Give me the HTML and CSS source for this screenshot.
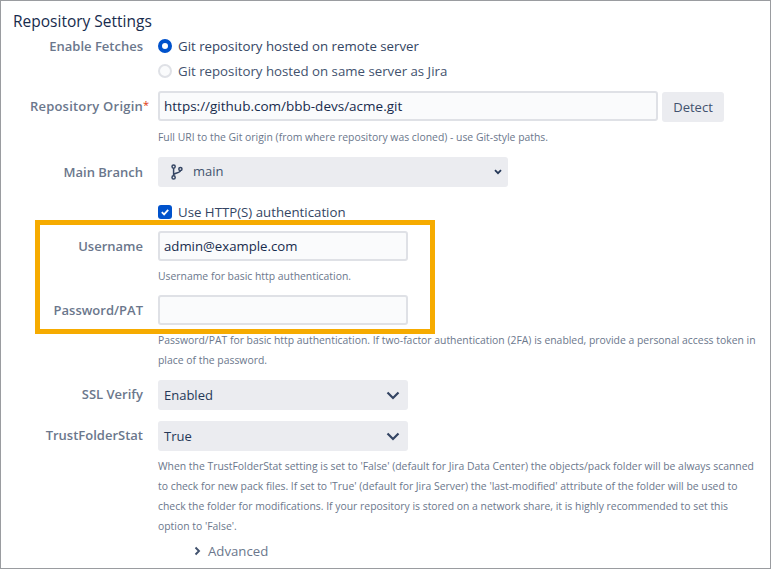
FILE: index.html
```html
<!DOCTYPE html>
<html lang="en">
<head>
<meta charset="utf-8">
<title>Repository Settings</title>
<link rel="stylesheet" href="styles.css">
</head>
<body>
<main class="panel">
  <h2 class="title">Repository Settings</h2>

  <div class="row row-fetch">
    <div class="label">Enable Fetches</div>
    <div class="control">
      <div class="choice"><span class="radio radio-on"></span><span>Git repository hosted on remote server</span></div>
      <div class="choice choice-second"><span class="radio"></span><span>Git repository hosted on same server as Jira</span></div>
    </div>
  </div>

  <div class="row row-origin">
    <div class="label label-origin"><span class="label-text">Repository Origin<span class="req">*</span></span></div>
    <div class="control">
      <div class="inline">
        <div class="input input-wide">https://github.com/bbb-devs/acme.git</div>
        <div class="button">Detect</div>
      </div>
      <div class="help help-one">Full URI to the Git origin (from where repository was cloned) - use Git-style paths.</div>
    </div>
  </div>

  <div class="row row-branch">
    <div class="label">Main Branch</div>
    <div class="control">
      <div class="select select-branch">
        <svg class="branch-icon" width="12" height="16" viewBox="0 0 12 16" fill="none" stroke="#344563" stroke-width="1.5">
          <circle cx="2.6" cy="2.6" r="1.6"/>
          <circle cx="2.6" cy="13.4" r="1.6"/>
          <circle cx="9.4" cy="5" r="1.6"/>
          <path d="M2.6 4.2V11.8M2.6 11C2.6 8.5 9.4 9.5 9.4 6.6"/>
        </svg>
        <span class="branch-name">main</span>
        <svg class="chev-small" width="8" height="6" viewBox="0 0 8 6" fill="none" stroke="#253858" stroke-width="1.8"><path d="M1 1.2L4 4.2L7 1.2"/></svg>
      </div>
    </div>
  </div>

  <div class="row row-check">
    <div class="label"></div>
    <div class="control">
      <div class="choice">
        <span class="check"><svg width="14" height="14" viewBox="0 0 14 14" fill="none" stroke="#fff" stroke-width="1.8"><path d="M3.8 7.2L6.1 9.4L10.2 4.8"/></svg></span>
        <span>Use HTTP(S) authentication</span>
      </div>
    </div>
  </div>

  <div class="row row-user">
    <div class="label label-input">Username</div>
    <div class="control">
      <div class="input input-mid">admin@example.com</div>
      <div class="help help-one">Username for basic http authentication.</div>
    </div>
  </div>

  <div class="row row-pass">
    <div class="label label-input">Password/PAT</div>
    <div class="control">
      <div class="input input-mid"></div>
      <div class="help">Password/PAT for basic http authentication. If two-factor authentication (2FA) is enabled, provide a personal access token in place of the password.</div>
    </div>
  </div>

  <div class="row row-ssl">
    <div class="label label-select">SSL Verify</div>
    <div class="control">
      <div class="select select-mid"><span>Enabled</span>
        <svg class="chev" width="14" height="9" viewBox="0 0 14 9" fill="none" stroke="#344563" stroke-width="2.2"><path d="M1.5 1.5L7 7L12.5 1.5"/></svg>
      </div>
    </div>
  </div>

  <div class="row row-trust">
    <div class="label label-select">TrustFolderStat</div>
    <div class="control">
      <div class="select select-mid"><span>True</span>
        <svg class="chev" width="14" height="9" viewBox="0 0 14 9" fill="none" stroke="#344563" stroke-width="2.2"><path d="M1.5 1.5L7 7L12.5 1.5"/></svg>
      </div>
      <div class="help">When the TrustFolderStat setting is set to 'False' (default for Jira Data Center) the objects/pack folder will be always scanned to check for new pack files. If set to 'True' (default for Jira Server) the 'last-modified' attribute of the folder will be used to check the folder for modifications. If your repository is stored on a network share, it is highly recommended to set this option to 'False'.</div>
    </div>
  </div>

  <div class="advanced">
    <svg width="7" height="10" viewBox="0 0 7 10" fill="none" stroke="#42526e" stroke-width="1.9"><path d="M1.5 1.5L5 5L1.5 8.5"/></svg>
    <span>Advanced</span>
  </div>

  <div class="highlight"></div>
</main>
</body>
</html>
```
FILE: styles.css
```css
* { box-sizing: border-box; }
html, body { margin: 0; padding: 0; background: #fff; }
body {
  width: 771px;
  height: 569px;
  overflow: hidden;
  font-family: "Open Sans", "Noto Sans", sans-serif;
  font-size: 13px;
  color: #253858;
}
.panel {
  position: relative;
  width: 771px;
  height: 569px;
  border: 1px solid #9a9ca0;
  padding: 10px 12px 0;
}
.title {
  margin: 0;
  height: 20px;
  font-size: 15.5px;
  line-height: 20px;
  font-weight: 500;
  color: #172b4d;
}
.row { display: grid; grid-template-columns: 130px 1fr; column-gap: 15px; }
.label {
  text-align: right;
  font-weight: 600;
  color: #6b778c;
  line-height: 20px;
  white-space: nowrap;
}
.label-text { position: relative; letter-spacing: 0.22px; }
.req {
  position: absolute;
  left: 100%;
  top: -2px;
  font-size: 11px;
  font-weight: 400;
  color: #de350b;
}
.label-input { padding-top: 5px; }
.label-select { padding-top: 4px; }
.row-fetch { margin-top: 5px; }
.row-origin { margin-top: 10px; }
.label-origin { padding-top: 5px; }
.row-branch { margin-top: 10px; }
.row-branch .label { padding-top: 5px; }
.row-check { margin-top: 15px; }
.row-user { margin-top: 9px; }
.row-pass { margin-top: 9px; }
.row-ssl { margin-top: 10px; }
.row-trust { margin-top: 11px; }
.choice {
  display: flex;
  align-items: center;
  gap: 6px;
  height: 20px;
  font-size: 13.25px;
  color: #344563;
  white-space: nowrap;
}
.choice-second { margin-top: 5px; color: #42526e; }
.radio {
  width: 14px;
  height: 14px;
  border-radius: 50%;
  background: #fafbfc;
  border: 2px solid #dfe1e6;
}
.radio-on { background: #fff; border: 4px solid #0052cc; }
.check {
  display: block;
  width: 14px;
  height: 14px;
  border-radius: 3px;
  background: #0052cc;
}
.check svg { display: block; }
.inline { display: flex; gap: 4px; align-items: flex-start; }
.input {
  height: 30px;
  padding: 0 4px;
  border: 2px solid #dfe1e6;
  border-radius: 3px;
  background: #fafbfc;
  font-size: 13.2px;
  line-height: 26px;
  color: #172b4d;
  white-space: nowrap;
}
.input-wide { width: 500px; font-size: 13.5px; }
.input-mid { width: 250px; }
.button {
  width: 62px;
  height: 30px;
  margin-top: 1px;
  background: #ebecf0;
  border-radius: 3px;
  text-align: center;
  line-height: 30px;
  color: #42526e;
}
.help {
  margin-top: 5px;
  width: 600px;
  font-size: 10.4px;
  line-height: 20px;
  color: #6b778c;
}
.help-one { white-space: nowrap; }
.select {
  position: relative;
  display: flex;
  align-items: center;
  height: 30px;
  background: #ebecf0;
  border-radius: 3px;
  color: #253858;
  padding-left: 6px;
}
.select-branch { width: 350px; padding-left: 13px; color: #42526e; }
.select-mid { width: 250px; }
.branch-icon { margin-right: 10px; }
.branch-name { position: relative; top: -1px; }
.chev-small { margin-left: auto; margin-right: 6px; }
.chev { margin-left: auto; margin-right: 8px; }
.advanced {
  display: flex;
  align-items: center;
  gap: 7px;
  height: 20px;
  margin-top: 5px;
  margin-left: 181px;
  font-size: 13.2px;
  color: #6b778c;
}
.highlight {
  position: absolute;
  left: 34px;
  top: 219px;
  width: 400px;
  height: 114px;
  border: 5px solid #f6ab00;
}
```
